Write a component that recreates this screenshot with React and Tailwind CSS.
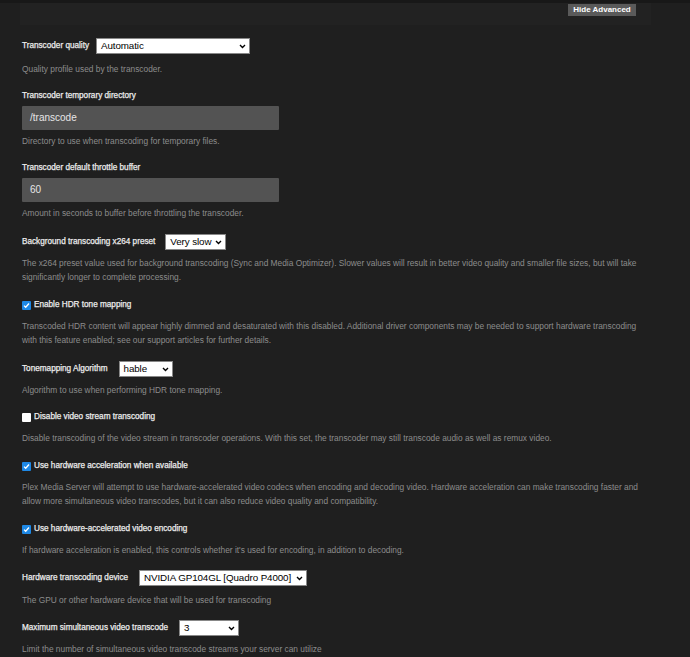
import React from 'react';

// small chevron used inside the white dropdowns
const Chevron = () => (
    <svg width="7" height="5" viewBox="0 0 7 5" className="shrink-0 ml-[2px]">
        <path d="M1 1l2.5 2.5L6 1" fill="none" stroke="#000" strokeWidth="1.4" />
    </svg>
);

const Select = ({ value, width }) => (
    <div className={`h-[16px] bg-white border border-[#888] flex items-center justify-between pl-[4px] pr-[3px] text-[9.8px] tracking-[-0.1px] text-black whitespace-nowrap ${width}`}>
        <span className="leading-none">{value}</span>
        <Chevron />
    </div>
);

const Check = ({ checked }) =>
    checked ? (
        <div className="w-[9px] h-[9px] bg-[#1e88e5] rounded-[1px] flex items-center justify-center">
            <svg width="7" height="7" viewBox="0 0 7 7">
                <path d="M1 3.6l1.7 1.7L6 1.5" fill="none" stroke="#fff" strokeWidth="1.3" />
            </svg>
        </div>
    ) : (
        <div className="w-[9px] h-[9px] bg-white rounded-[1px]" />
    );

const Desc = ({ children, className = '' }) => (
    <p className={`text-[8.35px] leading-[14px] text-[#8c8c8c] max-w-[622px] ${className}`}>{children}</p>
);

const Label = ({ children }) => (
    <span className="text-[8.2px] text-[#ececec] [-webkit-text-stroke:0.25px_#ececec] leading-[14px] whitespace-nowrap">{children}</span>
);

const Field = ({ value }) => (
    <div className="mt-[3px] w-[257px] h-[24px] bg-[#535353] rounded-[1px] flex items-center pl-[8px] text-[10px] text-[#e6e6e6]">
        {value}
    </div>
);

const App = () => {
    return (
        <div className="h-[657px] bg-[#1f1f1f] font-['Liberation_Sans',sans-serif] leading-[14px] overflow-hidden">
            <div className="h-[3px] bg-[#181818]" />
            <div className="ml-[20px] w-[631px] h-[22px] bg-[#222222] flex justify-end pr-[15px]">
                <button className="mt-[1px] h-[12px] w-[68px] bg-[#5a5a5a] text-white text-[8px] font-bold leading-none">
                    Hide Advanced
                </button>
            </div>

            <div className="pl-[22px]">
                {/* Transcoder quality */}
                <div className="mt-[13px] h-[16px] flex items-center gap-[7px]">
                    <Label>Transcoder quality</Label>
                    <Select value="Automatic" width="w-[154px]" />
                </div>
                <Desc className="mt-[8px]">Quality profile used by the transcoder.</Desc>

                {/* temp directory */}
                <div className="mt-[13px] h-[14px] flex items-center"><Label>Transcoder temporary directory</Label></div>
                <Field value="/transcode" />
                <Desc className="mt-[4px]">Directory to use when transcoding for temporary files.</Desc>

                {/* throttle buffer */}
                <div className="mt-[13px] h-[14px] flex items-center"><Label>Transcoder default throttle buffer</Label></div>
                <Field value="60" />
                <Desc className="mt-[4px]">Amount in seconds to buffer before throttling the transcoder.</Desc>

                {/* x264 preset */}
                <div className="mt-[14px] h-[16px] flex items-center gap-[10px]">
                    <Label>Background transcoding x264 preset</Label>
                    <Select value="Very slow" width="w-[61px]" />
                </div>
                <Desc className="mt-[6px]">
                    The x264 preset value used for background transcoding (Sync and Media Optimizer). Slower values will result in better video quality and smaller file sizes, but will take significantly longer to complete processing.
                </Desc>

                {/* HDR tone mapping */}
                <div className="mt-[14px] h-[14px] flex items-center gap-[3px]">
                    <Check checked />
                    <Label>Enable HDR tone mapping</Label>
                </div>
                <Desc className="mt-[7px]">
                    Transcoded HDR content will appear highly dimmed and desaturated with this disabled. Additional driver components may be needed to support hardware transcoding with this feature enabled; see our support articles for further details.
                </Desc>

                {/* tonemapping algorithm */}
                <div className="mt-[14px] h-[16px] flex items-center gap-[11px]">
                    <Label>Tonemapping Algorithm</Label>
                    <Select value="hable" width="w-[54px]" />
                </div>
                <Desc className="mt-[6px]">Algorithm to use when performing HDR tone mapping.</Desc>

                {/* disable video stream */}
                <div className="mt-[13px] h-[14px] flex items-center gap-[3px]">
                    <Check />
                    <Label>Disable video stream transcoding</Label>
                </div>
                <Desc className="mt-[7px]">
                    Disable transcoding of the video stream in transcoder operations. With this set, the transcoder may still transcode audio as well as remux video.
                </Desc>

                {/* hw acceleration */}
                <div className="mt-[14px] h-[14px] flex items-center gap-[3px]">
                    <Check checked />
                    <Label>Use hardware acceleration when available</Label>
                </div>
                <Desc className="mt-[7px]">
                    Plex Media Server will attempt to use hardware-accelerated video codecs when encoding and decoding video. Hardware acceleration can make transcoding faster and allow more simultaneous video transcodes, but it can also reduce video quality and compatibility.
                </Desc>

                {/* hw encoding */}
                <div className="mt-[14px] h-[14px] flex items-center gap-[3px]">
                    <Check checked />
                    <Label>Use hardware-accelerated video encoding</Label>
                </div>
                <Desc className="mt-[7px]">
                    If hardware acceleration is enabled, this controls whether it's used for encoding, in addition to decoding.
                </Desc>

                {/* device */}
                <div className="mt-[13px] h-[16px] flex items-center gap-[11px]">
                    <Label>Hardware transcoding device</Label>
                    <Select value="NVIDIA GP104GL [Quadro P4000]" width="w-[168px]" />
                </div>
                <Desc className="mt-[7px]">The GPU or other hardware device that will be used for transcoding</Desc>

                {/* max transcodes */}
                <div className="mt-[13px] h-[16px] flex items-center gap-[11px]">
                    <Label>Maximum simultaneous video transcode</Label>
                    <Select value="3" width="w-[60px]" />
                </div>
                <Desc className="mt-[6px]">Limit the number of simultaneous video transcode streams your server can utilize</Desc>
            </div>
        </div>
    );
};

export default App;
